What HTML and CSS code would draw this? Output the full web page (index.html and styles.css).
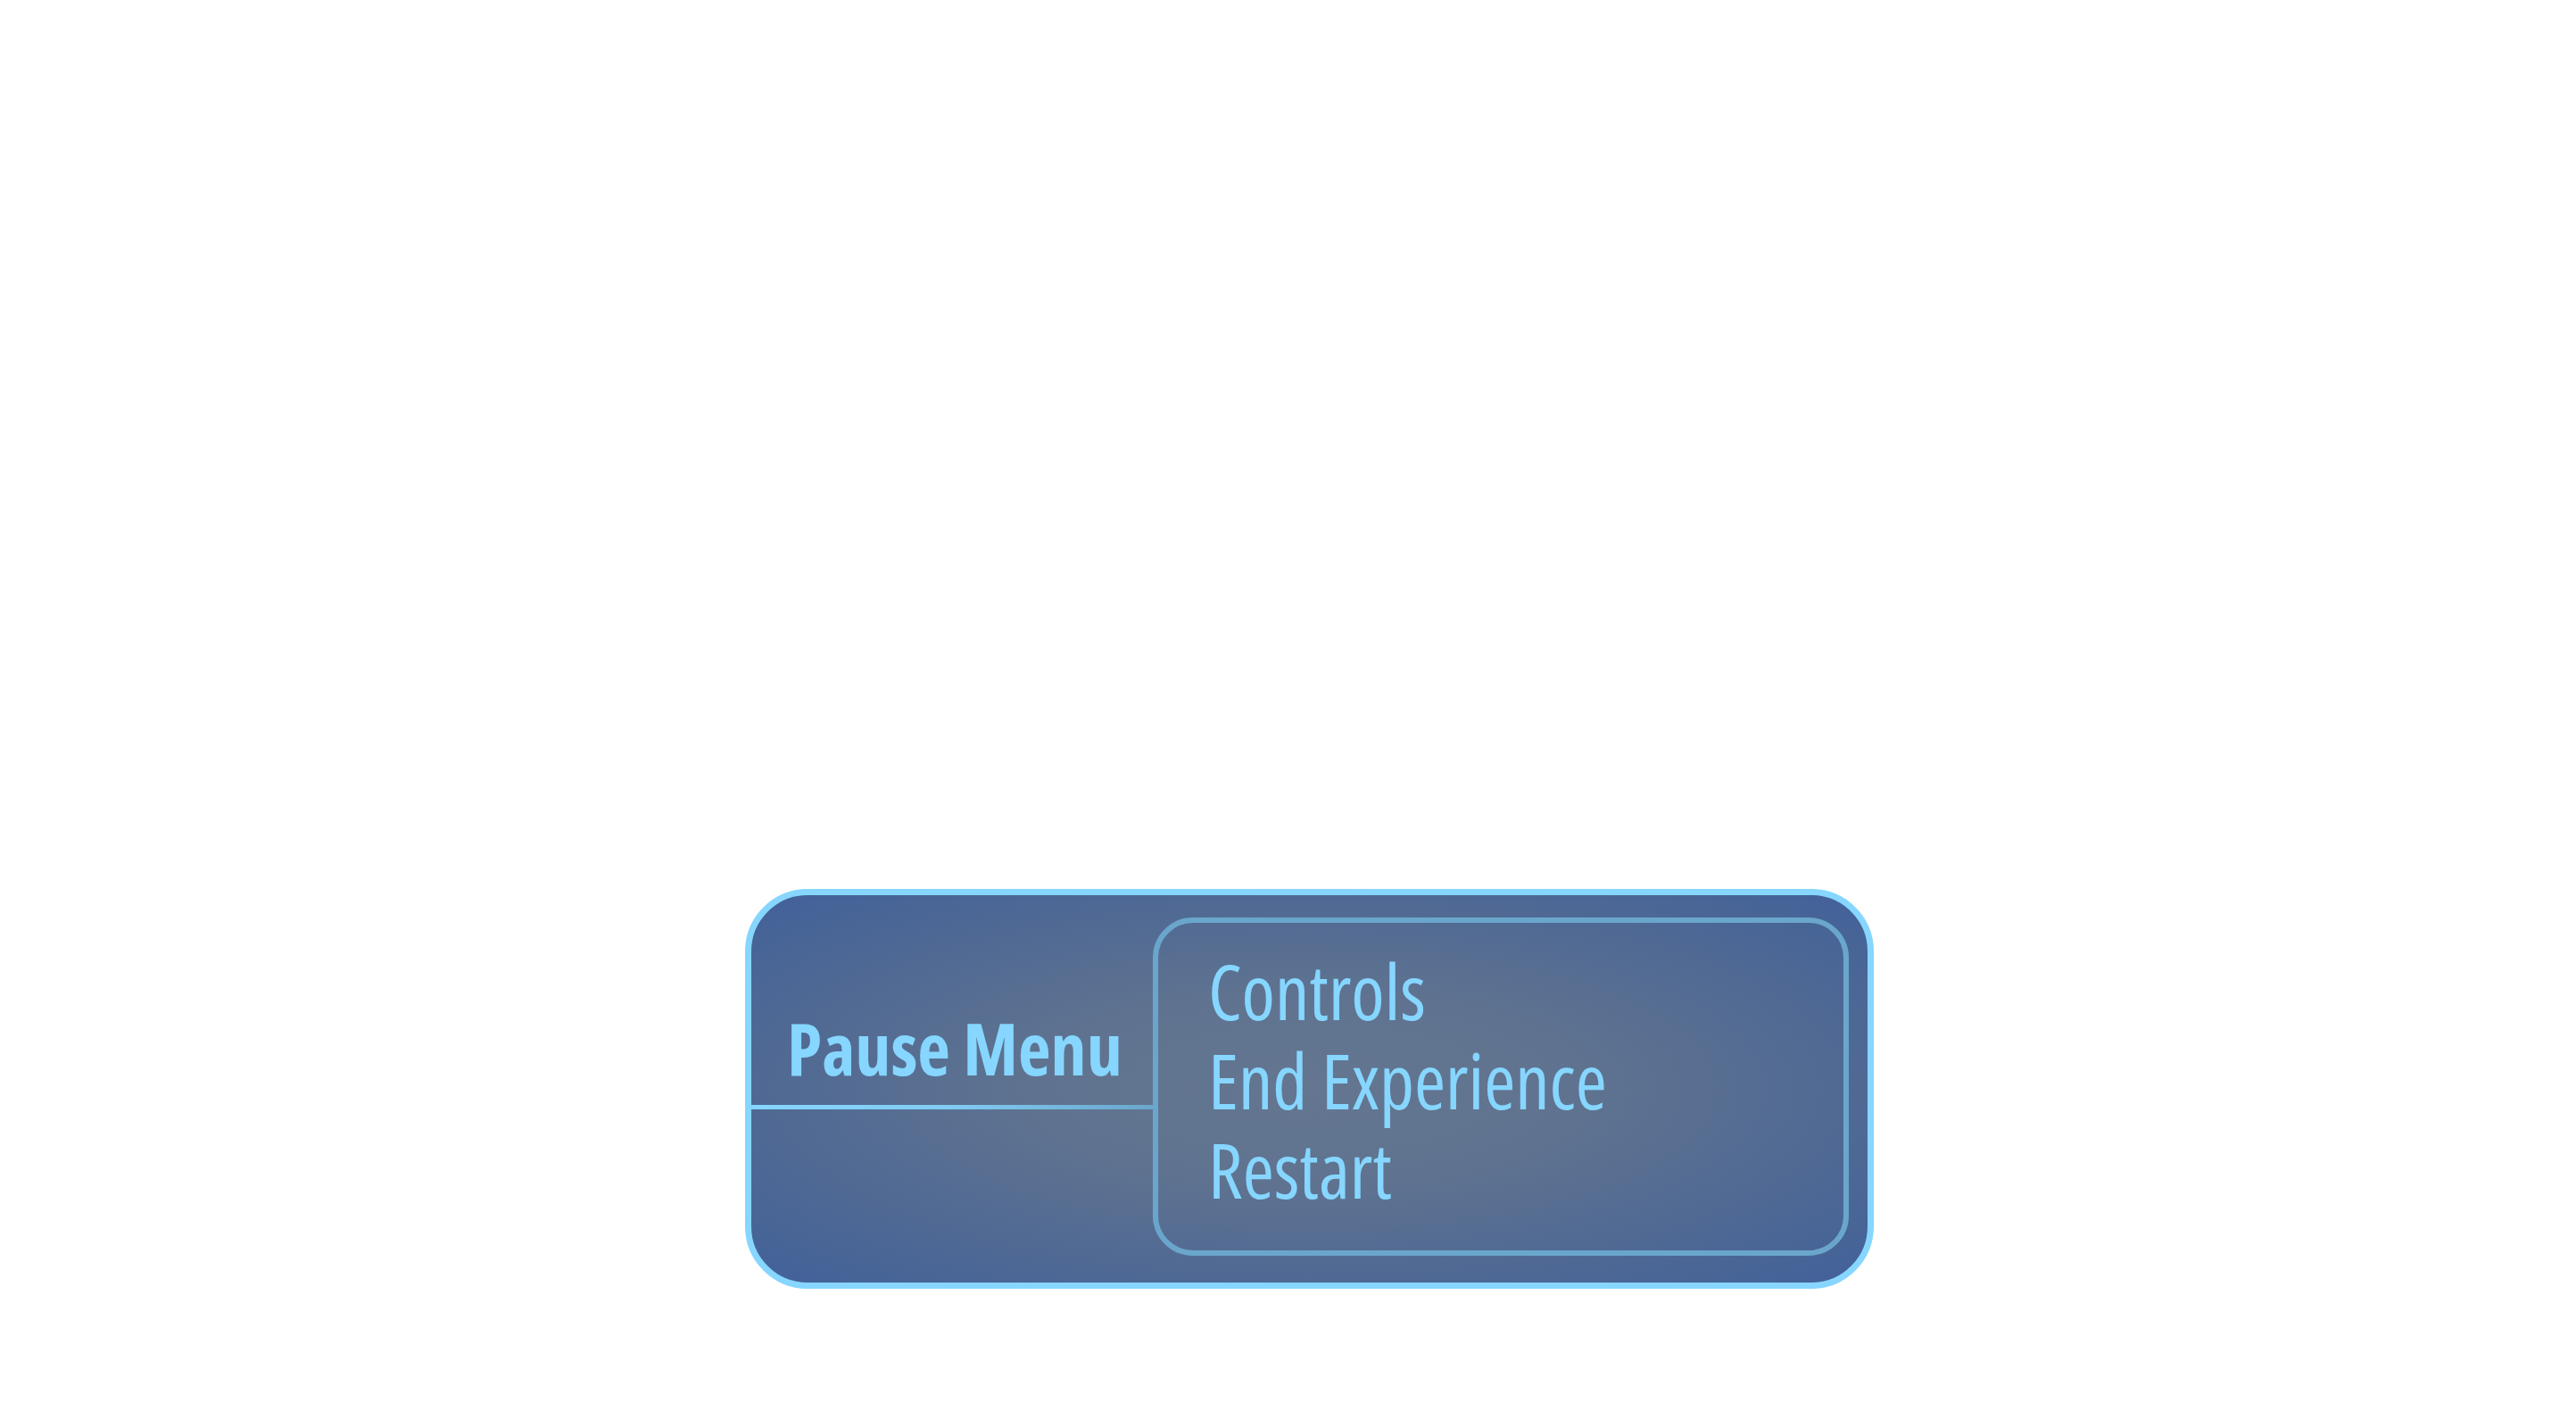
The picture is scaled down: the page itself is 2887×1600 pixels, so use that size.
FILE: index.html
```html
<!DOCTYPE html>
<html>
<head>
<meta charset="utf-8">
<title>Pause Menu</title>
<link rel="stylesheet" href="styles.css">
</head>
<body>
<main class="stage">
  <section class="panel">
    <div class="side">
      <div class="title-wrap"><h1 class="title">Pause Menu</h1></div>
      <div class="rule"></div>
    </div>
    <nav class="menu">
      <div class="item">Controls</div>
      <div class="item">End Experience</div>
      <div class="item">Restart</div>
    </nav>
  </section>
</main>
</body>
</html>
```
FILE: styles.css
```css
html, body { margin: 0; padding: 0; background: #ffffff; }
body { width: 2887px; height: 1600px; overflow: hidden; }

.stage { padding: 996px 0 0 835px; }
.panel {
  box-sizing: border-box;
  width: 1265px; height: 448px;
  border: 7px solid #86d6ff;
  border-radius: 70px;
  background: radial-gradient(ellipse at 50% 50%, #647690 0%, #5f7390 35%, #4f6994 70%, #42619a 100%);
  display: flex;
}
.side { width: 450px; flex-shrink: 0; display: flex; flex-direction: column; }
.title-wrap { height: 235px; display: flex; align-items: flex-end; }
.title {
  margin: 0 0 24px 40px;
  font-family: "Open Sans", "Liberation Sans", sans-serif;
  font-stretch: 75%;
  font-weight: 700; font-size: 80px; line-height: 80px; color: #86d6ff;
  white-space: nowrap;
}
.rule { height: 5px; background: linear-gradient(90deg, #86d6ff 0%, #80cbf2 50%, #6aa6cc 100%); }
.menu {
  box-sizing: border-box;
  flex: 1;
  margin: 25px 21px 30px 0;
  border: 6px solid #6aa6cc;
  border-radius: 45px;
  padding: 26px 0 0 56px;
}
.item {
  font-family: "Open Sans", "Liberation Sans", sans-serif;
  font-stretch: 75%;
  font-weight: 400;
  font-size: 85px; line-height: 100px; color: #86d6ff;
  white-space: nowrap;
}
```
